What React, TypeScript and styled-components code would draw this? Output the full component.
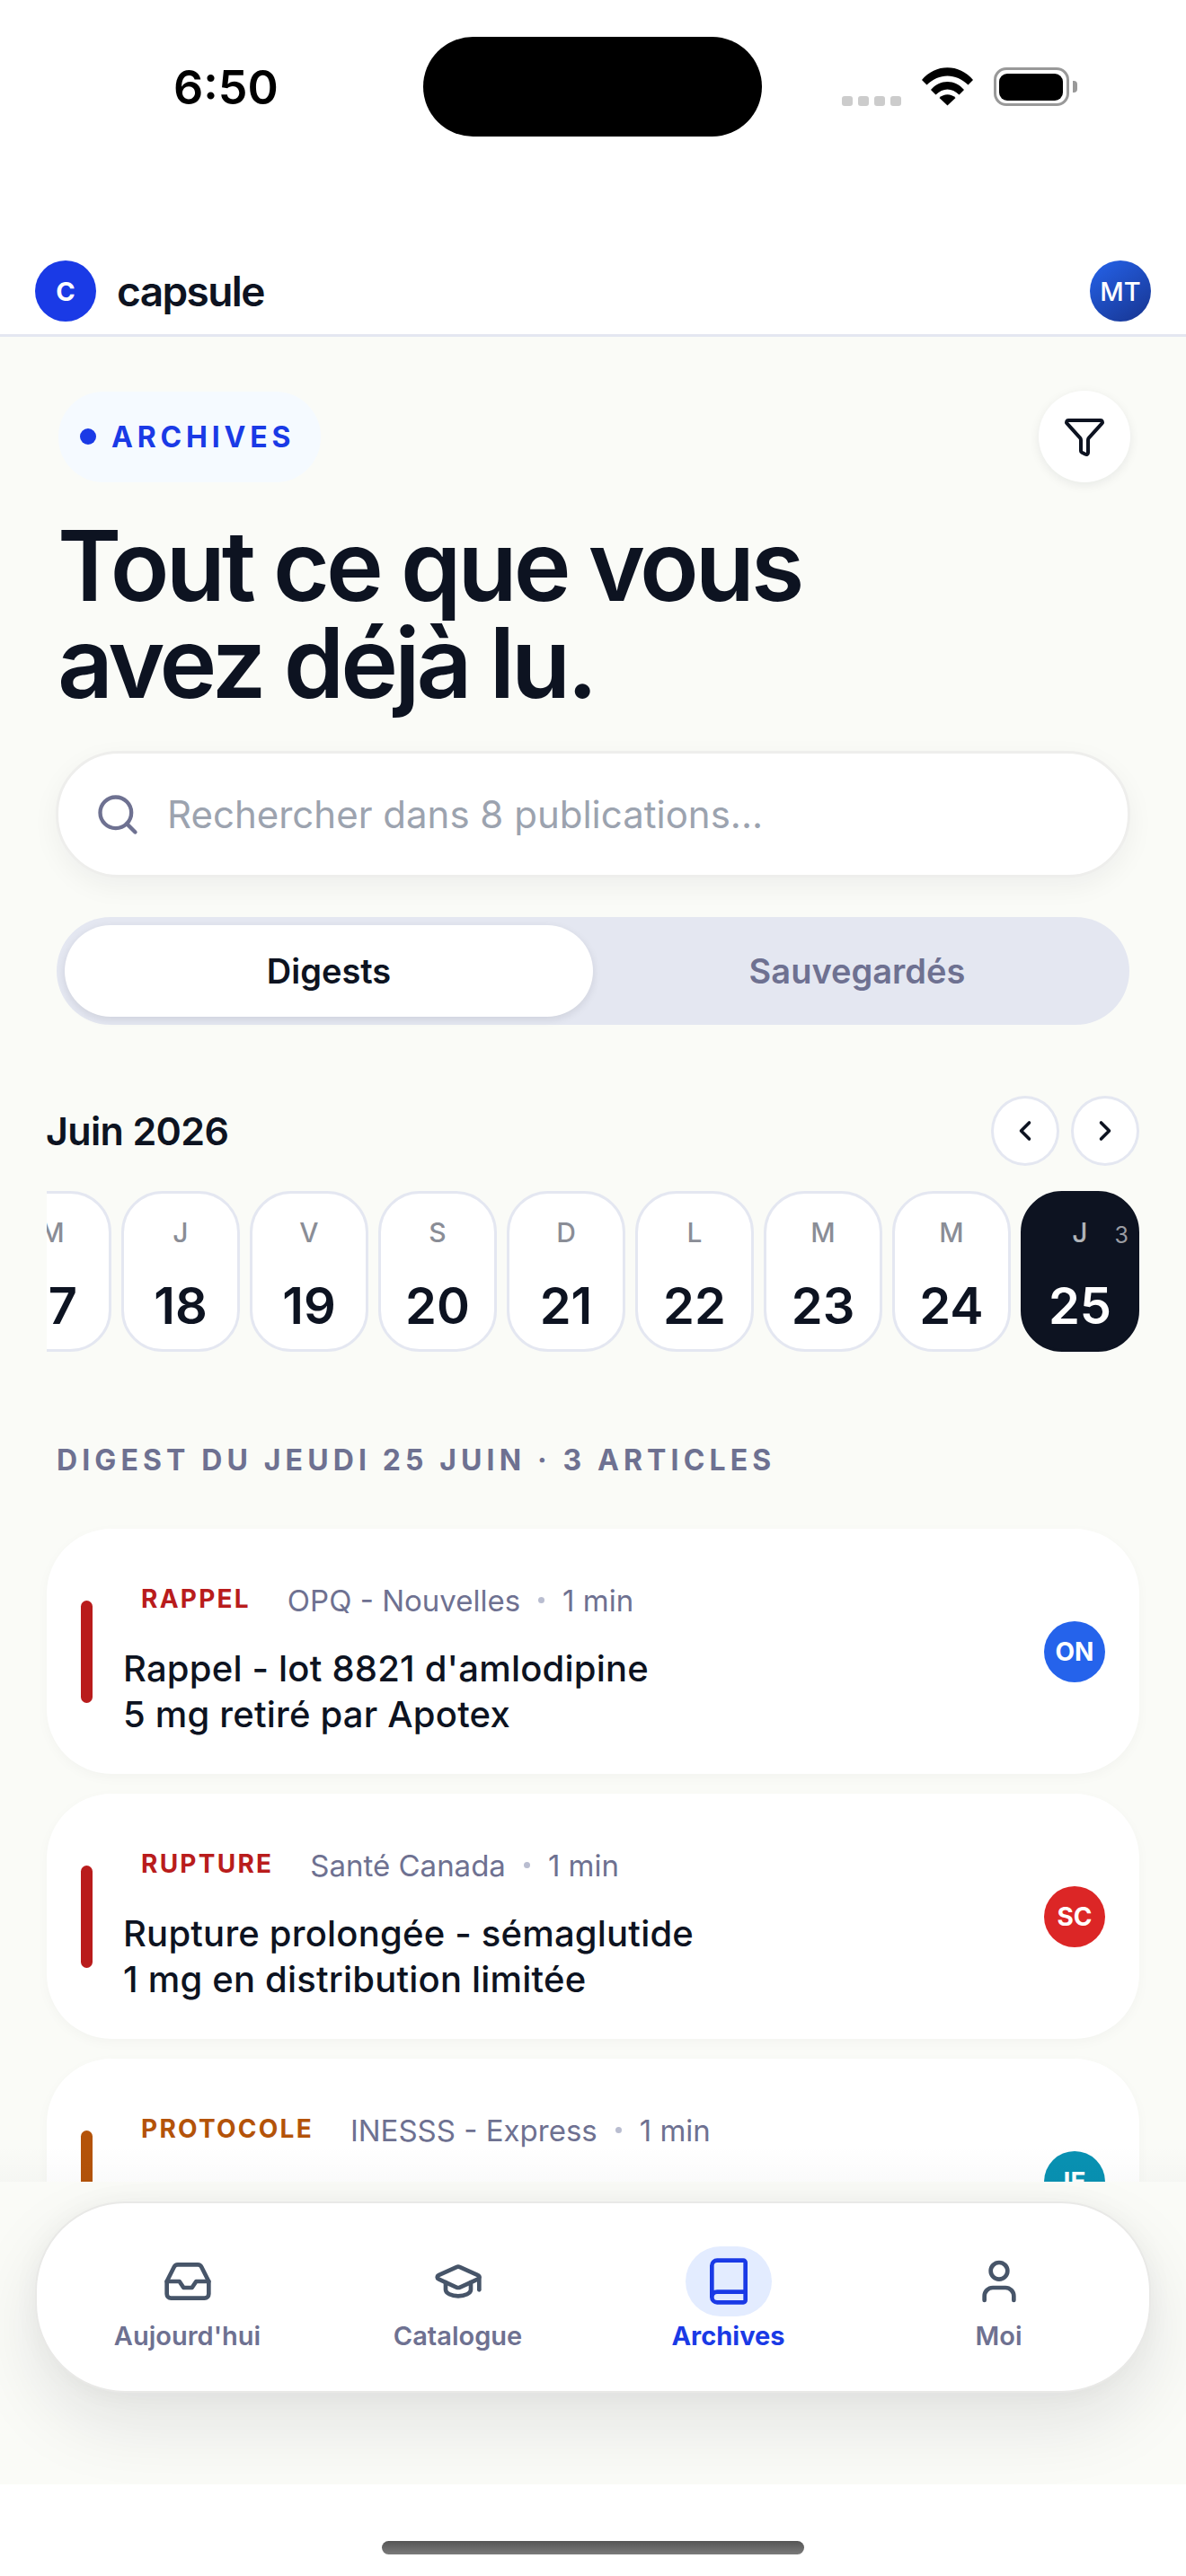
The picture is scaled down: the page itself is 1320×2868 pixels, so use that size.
import React from 'react';
import styled, { createGlobalStyle } from 'styled-components';
import { Book, ChevronLeft, ChevronRight, Funnel, GraduationCap, Inbox, Search, User } from 'lucide-react';

const GlobalStyle = createGlobalStyle`
    html, body {
        margin: 0;
        padding: 0;
        background: #ffffff;
        font-family: Inter, "Liberation Sans", sans-serif;
        color: #0d1321;
    }
    * {
        box-sizing: border-box;
    }
`;

const BLUE = '#1a3ae6';
const MUTED = '#6e7191';
const INK = '#0d1321';
const LINE = '#e4e7f1';
const PAPER = '#fafbf7';

const Phone = styled.div`
    width: 1320px;
    height: 2868px;
    display: flex;
    flex-direction: column;
    background: #ffffff;
    overflow: hidden;
`;

/* status bar */
const StatusBar = styled.div`
    height: 290px;
    padding-top: 41px;
    display: grid;
    grid-template-columns: 471px 377px 1fr;
    align-items: start;
`;

const Time = styled.div`
    padding: 26px 0 0 193px;
    font-size: 52px;
    line-height: 62px;
    font-weight: 600;
    color: #000000;
`;

const Island = styled.div`
    height: 111px;
    border-radius: 56px;
    background: #000000;
`;

const StatusIcons = styled.div`
    height: 77px;
    padding: 34px 0 0 89px;
    display: flex;
    align-items: flex-end;
`;

const SignalDots = styled.div`
    display: flex;
    gap: 6.5px;
    margin-right: 23px;
`;

const SignalDot = styled.span`
    width: 11.5px;
    height: 11px;
    border-radius: 3px;
    background: #cccccc;
`;

const Battery = styled.div`
    width: 84px;
    height: 43px;
    margin-left: 23px;
    padding: 3.5px;
    border: 3.5px solid #999999;
    border-radius: 14px;
    position: relative;

    &::before {
        content: '';
        display: block;
        height: 100%;
        background: #000000;
        border-radius: 9px;
    }

    &::after {
        content: '';
        position: absolute;
        right: -12px;
        top: 12px;
        width: 5px;
        height: 13px;
        border-radius: 0 4px 4px 0;
        background: #999999;
    }
`;

/* app header */
const Header = styled.header`
    height: 85px;
    padding: 0 39px 14px;
    display: flex;
    align-items: center;
    justify-content: space-between;
    background: #ffffff;
    border-bottom: 3px solid ${LINE};
`;

const Brand = styled.div`
    display: flex;
    align-items: center;
    gap: 23px;
`;

const BrandMark = styled.div`
    width: 68px;
    height: 68px;
    border-radius: 50%;
    background: ${BLUE};
    color: #ffffff;
    display: flex;
    align-items: center;
    justify-content: center;
    font-size: 29px;
    font-weight: 700;
`;

const BrandName = styled.div`
    font-size: 46px;
    font-weight: 600;
    letter-spacing: -0.035em;
    color: ${INK};
`;

const Avatar = styled.div`
    width: 68px;
    height: 68px;
    border-radius: 50%;
    background: linear-gradient(145deg, #2563eb 0%, #17348f 100%);
    color: #ffffff;
    display: flex;
    align-items: center;
    justify-content: center;
    font-size: 29px;
    font-weight: 500;
`;

/* scrolling content */
const Content = styled.main`
    position: relative;
    height: 2054px;
    overflow: hidden;
    background: ${PAPER};
`;

const Fade = styled.div`
    position: absolute;
    left: 0;
    right: 0;
    bottom: 0;
    height: 40px;
    background: linear-gradient(180deg, rgba(15, 23, 42, 0) 0%, rgba(15, 23, 42, 0.02) 100%);
`;

const Intro = styled.section`
    padding: 60px 62px 0;
`;

const TopRow = styled.div`
    display: flex;
    align-items: center;
    justify-content: space-between;
`;

const Eyebrow = styled.div`
    width: 292px;
    height: 101px;
    margin-left: 3px;
    padding-left: 24px;
    display: flex;
    align-items: center;
    gap: 17px;
    border-radius: 50px;
    background: #f5faff;
    color: ${BLUE};
    font-size: 32px;
    font-weight: 700;
    letter-spacing: 0.15em;
`;

const EyebrowDot = styled.span`
    width: 18px;
    height: 18px;
    border-radius: 50%;
    background: ${BLUE};
`;

const FilterButton = styled.button`
    width: 102px;
    height: 102px;
    padding: 0;
    border: none;
    border-radius: 50%;
    background: #ffffff;
    color: ${INK};
    display: flex;
    align-items: center;
    justify-content: center;
    box-shadow: 0 3px 12px rgba(15, 23, 42, 0.08);
`;

const Title = styled.h1`
    margin: 39px 0 44px 2px;
    font-size: 108px;
    line-height: 108px;
    font-weight: 600;
    letter-spacing: -0.037em;
    color: ${INK};
`;

const SearchBox = styled.div`
    height: 141px;
    padding: 0 40px;
    display: flex;
    align-items: center;
    gap: 29px;
    background: #ffffff;
    border: 3px solid #eeeeec;
    border-radius: 70px;
    box-shadow: 0 10px 30px rgba(15, 23, 42, 0.05);
    color: ${MUTED};
`;

const Placeholder = styled.span`
    font-size: 42px;
    color: #9ca3af;
`;

const Tabs = styled.div`
    height: 120px;
    margin: 44px 1px 0;
    padding: 9px;
    display: flex;
    background: ${LINE};
    border-radius: 60px;
`;

const Tab = styled.div<{ $active?: boolean }>`
    flex: 1;
    display: flex;
    align-items: center;
    justify-content: center;
    border-radius: 52px;
    font-size: 38px;
    font-weight: 600;
    color: ${({ $active }) => ($active ? INK : MUTED)};
    background: ${({ $active }) => ($active ? '#ffffff' : 'transparent')};
    box-shadow: ${({ $active }) => ($active ? '0 3px 10px rgba(15, 23, 42, 0.1)' : 'none')};
`;

const Calendar = styled.section`
    padding: 79px 52px 0;
`;

const MonthRow = styled.div`
    display: flex;
    align-items: center;
    justify-content: space-between;
`;

const Month = styled.div`
    margin-left: -1px;
    font-size: 43px;
    font-weight: 600;
    letter-spacing: -0.015em;
    color: ${INK};
`;

const MonthNav = styled.div`
    display: flex;
    gap: 13px;
`;

const RoundButton = styled.button`
    width: 76px;
    height: 78px;
    padding: 0;
    border: 3px solid ${LINE};
    border-radius: 50%;
    background: #ffffff;
    color: ${INK};
    display: flex;
    align-items: center;
    justify-content: center;
`;

const DayStrip = styled.div`
    margin-top: 28px;
    display: flex;
    justify-content: flex-end;
    gap: 11px;
    overflow: hidden;
`;

const Day = styled.div<{ $active?: boolean }>`
    position: relative;
    flex: 0 0 132px;
    height: 179px;
    padding-top: 25px;
    display: flex;
    flex-direction: column;
    align-items: center;
    border: 3px solid ${({ $active }) => ($active ? INK : LINE)};
    border-radius: 46px;
    background: ${({ $active }) => ($active ? INK : '#ffffff')};
`;

const DayLetter = styled.span<{ $active?: boolean }>`
    font-size: 30px;
    line-height: 36px;
    font-weight: 500;
    color: ${({ $active }) => ($active ? '#b0b3b8' : '#8a8d96')};
`;

const DayNumber = styled.span<{ $active?: boolean }>`
    margin-top: 30px;
    font-size: 56px;
    line-height: 68px;
    font-weight: 600;
    color: ${({ $active }) => ($active ? '#ffffff' : INK)};
`;

const DayCount = styled.span`
    position: absolute;
    top: 31px;
    right: 9px;
    font-size: 25px;
    line-height: 30px;
    color: #9a9ca3;
`;

const Digest = styled.section`
    padding: 101px 52px 0;
`;

const DigestHeading = styled.h2`
    margin: 0 0 57px 11px;
    font-size: 32px;
    line-height: 39px;
    font-weight: 700;
    letter-spacing: 0.16em;
    color: ${MUTED};
`;

const CardList = styled.div`
    display: flex;
    flex-direction: column;
    gap: 22px;
`;

const Card = styled.article`
    min-height: 273px;
    padding: 0 38px;
    display: flex;
    align-items: center;
    background: #ffffff;
    border-radius: 72px;
    box-shadow: 0 4px 14px rgba(15, 23, 42, 0.03);
`;

const Stripe = styled.span<{ $color: string }>`
    flex: 0 0 13px;
    height: 114px;
    border-radius: 7px;
    background: ${({ $color }) => $color};
`;

const CardBody = styled.div`
    flex: 1;
    margin-left: 34px;
    padding-top: 18px;
`;

const Meta = styled.div`
    height: 40px;
    display: flex;
    align-items: center;
    font-size: 33px;
    color: ${MUTED};
`;

const Tag = styled.span<{ $color: string }>`
    padding: 0 20px 4px;
    margin-right: 21px;
    font-size: 28px;
    font-weight: 700;
    letter-spacing: 0.08em;
    color: ${({ $color }) => $color};
`;

const MetaDot = styled.span`
    width: 7px;
    height: 7px;
    margin: 0 20px;
    border-radius: 50%;
    background: #b9bdd0;
`;

const CardTitle = styled.h3`
    margin: 30px 0 0;
    font-size: 40px;
    line-height: 51px;
    font-weight: 500;
    letter-spacing: 0.2px;
    color: ${INK};
`;

const SourceBadge = styled.span<{ $color: string }>`
    flex: 0 0 68px;
    height: 68px;
    border-radius: 50%;
    display: flex;
    align-items: center;
    justify-content: center;
    font-size: 28px;
    font-weight: 700;
    color: #ffffff;
    background: ${({ $color }) => $color};
`;

/* bottom navigation */
const Footer = styled.footer`
    height: 337px;
    padding: 22px 39px 0;
    background: ${PAPER};
    overflow: hidden;
`;

const BottomNav = styled.nav`
    height: 213px;
    padding: 48px 17px 0;
    display: grid;
    grid-template-columns: repeat(4, 1fr);
    background: #ffffff;
    border: 2px solid #e9e9e7;
    border-radius: 100px;
    box-shadow: 0 34px 80px rgba(15, 23, 42, 0.1), 0 0 30px rgba(15, 23, 42, 0.04);
`;

const NavItem = styled.div<{ $active?: boolean }>`
    display: flex;
    flex-direction: column;
    align-items: center;
    gap: 4px;
    font-size: 29px;
    line-height: 36px;
    font-weight: ${({ $active }) => ($active ? 700 : 600)};
    color: ${({ $active }) => ($active ? BLUE : MUTED)};
`;

const NavIcon = styled.span<{ $active?: boolean }>`
    width: 96px;
    height: 78px;
    display: flex;
    align-items: center;
    justify-content: center;
    border-radius: 40px;
    color: ${({ $active }) => ($active ? BLUE : '#475569')};
    background: ${({ $active }) => ($active ? '#e3ecff' : 'transparent')};
`;

const HomeArea = styled.div`
    flex: 1;
    padding-top: 63px;
    display: flex;
    justify-content: center;
    background: #ffffff;
`;

const HomeBar = styled.div`
    width: 470px;
    height: 15px;
    border-radius: 8px;
    background: linear-gradient(180deg, #555555 0%, #7a7a7a 100%);
`;

function WifiIcon() {
    return (
        <svg width="57" height="43" viewBox="0 0 57 43" fill="#000000">
            <path d="M0 14C15 -4.5 42 -4.5 57 14L51.5 19.5C38 6 19 6 5.5 19.5Z" />
            <path d="M10 25C20 13 37 13 47 25L41.5 30.5C33.5 22.5 23.5 22.5 15.5 30.5Z" />
            <path d="M19.5 34C24.5 29 32.5 29 37.5 34L28.5 42.5Z" />
        </svg>
    );
}

const days = [
    { letter: 'M', number: 17 },
    { letter: 'J', number: 18 },
    { letter: 'V', number: 19 },
    { letter: 'S', number: 20 },
    { letter: 'D', number: 21 },
    { letter: 'L', number: 22 },
    { letter: 'M', number: 23 },
    { letter: 'M', number: 24 },
    { letter: 'J', number: 25, count: 3, active: true },
];

const articles = [
    {
        tag: 'RAPPEL',
        color: '#b91c1c',
        source: 'OPQ - Nouvelles',
        lines: ["Rappel - lot 8821 d'amlodipine", '5 mg retiré par Apotex'],
        badge: 'ON',
        badgeColor: '#2563eb',
    },
    {
        tag: 'RUPTURE',
        color: '#b91c1c',
        source: 'Santé Canada',
        lines: ['Rupture prolongée - sémaglutide', '1 mg en distribution limitée'],
        badge: 'SC',
        badgeColor: '#dc2626',
    },
    {
        tag: 'PROTOCOLE',
        color: '#b45309',
        source: 'INESSS - Express',
        lines: ['Protocole médical national', 'mis à jour'],
        badge: 'IE',
        badgeColor: '#0891b2',
    },
];

const navItems = [
    { label: "Aujourd'hui", Icon: Inbox },
    { label: 'Catalogue', Icon: GraduationCap },
    { label: 'Archives', Icon: Book, active: true },
    { label: 'Moi', Icon: User },
];

export default function App() {
    return (
        <Phone>
            <GlobalStyle />
            <StatusBar>
                <Time>6:50</Time>
                <Island />
                <StatusIcons>
                    <SignalDots>
                        <SignalDot />
                        <SignalDot />
                        <SignalDot />
                        <SignalDot />
                    </SignalDots>
                    <WifiIcon />
                    <Battery />
                </StatusIcons>
            </StatusBar>

            <Header>
                <Brand>
                    <BrandMark>C</BrandMark>
                    <BrandName>capsule</BrandName>
                </Brand>
                <Avatar>MT</Avatar>
            </Header>

            <Content>
                <Intro>
                    <TopRow>
                        <Eyebrow>
                            <EyebrowDot />
                            ARCHIVES
                        </Eyebrow>
                        <FilterButton>
                            <Funnel size={48} strokeWidth={2} />
                        </FilterButton>
                    </TopRow>
                    <Title>
                        Tout ce que vous
                        <br />
                        avez déjà lu.
                    </Title>
                    <SearchBox>
                        <Search size={52} strokeWidth={2} />
                        <Placeholder>Rechercher dans 8 publications...</Placeholder>
                    </SearchBox>
                    <Tabs>
                        <Tab $active>Digests</Tab>
                        <Tab>Sauvegardés</Tab>
                    </Tabs>
                </Intro>

                <Calendar>
                    <MonthRow>
                        <Month>Juin 2026</Month>
                        <MonthNav>
                            <RoundButton>
                                <ChevronLeft size={36} strokeWidth={2.4} />
                            </RoundButton>
                            <RoundButton>
                                <ChevronRight size={36} strokeWidth={2.4} />
                            </RoundButton>
                        </MonthNav>
                    </MonthRow>
                    <DayStrip>
                        {days.map((day) => (
                            <Day key={day.number} $active={day.active}>
                                <DayLetter $active={day.active}>{day.letter}</DayLetter>
                                <DayNumber $active={day.active}>{day.number}</DayNumber>
                                {day.count && <DayCount>{day.count}</DayCount>}
                            </Day>
                        ))}
                    </DayStrip>
                </Calendar>

                <Digest>
                    <DigestHeading>DIGEST DU JEUDI 25 JUIN · 3 ARTICLES</DigestHeading>
                    <CardList>
                        {articles.map((article) => (
                            <Card key={article.tag}>
                                <Stripe $color={article.color} />
                                <CardBody>
                                    <Meta>
                                        <Tag $color={article.color}>{article.tag}</Tag>
                                        {article.source}
                                        <MetaDot />1 min
                                    </Meta>
                                    <CardTitle>
                                        {article.lines[0]}
                                        <br />
                                        {article.lines[1]}
                                    </CardTitle>
                                </CardBody>
                                <SourceBadge $color={article.badgeColor}>{article.badge}</SourceBadge>
                            </Card>
                        ))}
                    </CardList>
                </Digest>
                <Fade />
            </Content>

            <Footer>
                <BottomNav>
                    {navItems.map(({ label, Icon, active }) => (
                        <NavItem key={label} $active={active}>
                            <NavIcon $active={active}>
                                <Icon size={56} strokeWidth={2} />
                            </NavIcon>
                            {label}
                        </NavItem>
                    ))}
                </BottomNav>
            </Footer>

            <HomeArea>
                <HomeBar />
            </HomeArea>
        </Phone>
    );
}
